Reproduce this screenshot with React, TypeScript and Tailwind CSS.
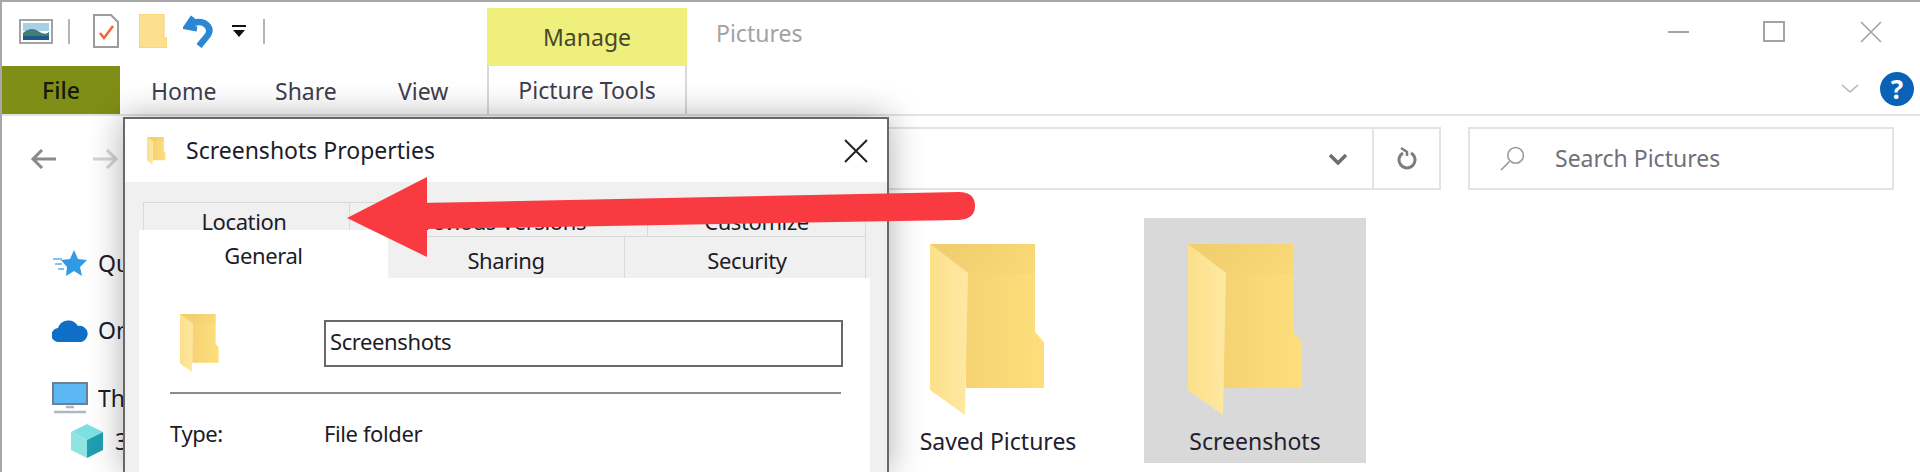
import { useId } from "react";

function FolderIcon({ className }: { className: string }) {
    const id = useId();
    return (
        <svg viewBox="0 0 118 174" className={className}>
            <defs>
                <linearGradient id={`${id}-back`} x1="0" x2="1" y1="0" y2="0">
                    <stop offset="0.3" stopColor="#f5d272" />
                    <stop offset="1" stopColor="#fedf7c" />
                </linearGradient>
                <linearGradient id={`${id}-flap`} x1="0" x2="1" y1="0" y2="0.6">
                    <stop offset="0" stopColor="#eccb6c" />
                    <stop offset="1" stopColor="#f6d576" />
                </linearGradient>
                <linearGradient id={`${id}-front`} x1="0" x2="1" y1="0" y2="0">
                    <stop offset="0" stopColor="#fce08a" />
                    <stop offset="1" stopColor="#fee8a2" />
                </linearGradient>
            </defs>
            <path d="M0 0H105V88L114 98V144H36V28Z" fill={`url(#${id}-back)`} />
            <path d="M0 0H105V30H38Z" fill={`url(#${id}-flap)`} opacity="0.6" />
            <path d="M0 0L38 29L35 171L0 146Z" fill={`url(#${id}-front)`} />
        </svg>
    );
}

function FolderItem({ label, selected }: { label: string; selected?: boolean }) {
    return (
        <div className={`flex h-[245px] w-[222px] flex-col items-center pt-[26px] ${selected ? "bg-[#d9d9d9]" : ""}`}>
            <FolderIcon className={`h-[174px] w-[118px] ${selected ? "translate-x-[-8px]" : "translate-x-[-9px]"}`} />
            <div className="mt-[9px] text-[23px] leading-[28px] text-[#1f2030]">{label}</div>
        </div>
    );
}

function DialogTab({ label, width, className = "" }: { label: string; width: string; className?: string }) {
    return (
        <div className={`flex items-center justify-center border-r border-t border-[#d9d9d9] bg-[#f0f0f0] text-[22px] tracking-[-0.4px] text-[#1c1c28] ${width} ${className}`}>
            {label}
        </div>
    );
}

function PropertiesDialog() {
    return (
        <div className="absolute left-[121px] top-[115px] h-[355px] w-[766px] border-x-2 border-t-2 border-[#686868] bg-white shadow-[0_0_32px_rgba(0,0,0,0.32)]">
            <div className="flex h-[63px] items-center pl-[22px] pr-[19px]">
                <FolderIcon className="h-[28px] w-[19px]" />
                <div className="ml-[20px] flex-1 text-[23px] text-[#1c1c2c]">Screenshots Properties</div>
                <svg viewBox="0 0 24 24" className="h-[24px] w-[24px]" fill="none" stroke="#222" strokeWidth="2">
                    <path d="M1 1L23 23M23 1L1 23" />
                </svg>
            </div>
            <div className="h-[292px] bg-[#f0f0f0] pt-[20px]">
                <div className="ml-[18px] flex h-[34px]">
                    <DialogTab label="Location" width="w-[207px]" className="border-l pr-[5px] pt-[3px]" />
                    <DialogTab label="Previous Versions" width="w-[298px]" className="pt-[3px]" />
                    <DialogTab label="Customize" width="w-[218px]" className="pt-[3px]" />
                </div>
                <div className="ml-[14px] flex h-[42px]">
                    <div className="-mt-[6px] flex h-[48px] w-[249px] items-center justify-center bg-white pt-[2px] text-[22px] tracking-[-0.4px] text-[#1c1c28]">
                        General
                    </div>
                    <DialogTab label="Sharing" width="w-[237px]" className="pt-[6px]" />
                    <DialogTab label="Security" width="w-[241px]" className="pl-[4px] pt-[6px]" />
                </div>
                <div className="ml-[14px] h-[196px] w-[731px] bg-white pl-[31px] pt-[42px]">
                    <div className="flex h-[47px] items-center">
                        <FolderIcon className="ml-[10px] h-[59px] w-[40px]" />
                        <div className="ml-[104px] flex h-[47px] w-[519px] items-center border-2 border-[#696969] pb-[5px] pl-[4px] text-[22px] tracking-[-0.4px] text-[#1c1c28]">
                            Screenshots
                        </div>
                    </div>
                    <div className="mt-[25px] h-[2px] w-[671px] bg-[#8c8c8c]" />
                    <div className="mt-[23px] flex text-[22px] tracking-[-0.4px] text-[#1c1c28]">
                        <div className="w-[154px]">Type:</div>
                        <div>File folder</div>
                    </div>
                </div>
            </div>
        </div>
    );
}

function RedArrow() {
    return (
        <svg viewBox="0 0 630 84" className="absolute left-[345px] top-[174px] h-[84px] w-[630px]">
            <path d="M0 42L80 1V27L612 16Q628 16 628 30Q628 43 612 44L80 53V81Z" fill="#fa3a41" />
        </svg>
    );
}

export default function App() {
    return (
        <div className="relative h-[472px] w-[1920px] overflow-hidden border-l-2 border-t-2 border-[#a8a8a8] bg-white font-['Noto_Sans',sans-serif]">
            {/* quick access row */}
            <div className="flex h-[64px]">
                <div className="flex h-[50px] w-[485px] items-center pl-[17px] pt-[8px]">
                    <svg viewBox="0 0 34 25" className="h-[25px] w-[34px]">
                        <rect x="1" y="1" width="32" height="23" fill="#fff" stroke="#a3a3a3" strokeWidth="2" />
                        <rect x="4" y="4" width="26" height="8" fill="#a8cfe8" />
                        <path d="M4 14Q12 7 19 12T30 13V21H4Z" fill="#3f7f74" />
                        <rect x="4" y="17" width="26" height="4" fill="#1f5a8c" />
                    </svg>
                    <div className="ml-[15px] h-[25px] w-[2px] bg-[#b5b5b5]" />
                    <svg viewBox="0 0 26 34" className="ml-[23px] h-[34px] w-[26px]" fill="none">
                        <path d="M1 1H18L25 8V33H1Z" stroke="#9c9c9c" strokeWidth="2" />
                        <path d="M7 19L11 24L20 12" stroke="#f0653a" strokeWidth="2.5" />
                    </svg>
                    <svg viewBox="0 0 28 34" className="ml-[20px] h-[34px] w-[28px]">
                        <path d="M0 0H25V24H28V34H0Z" fill="#fde08e" stroke="#f3cf6c" />
                    </svg>
                    <svg viewBox="0 0 30 33" className="ml-[16px] h-[33px] w-[30px]" fill="none">
                        <path d="M10 2L3 12L14 14" stroke="#2b86d6" strokeWidth="5" />
                        <path d="M5 11Q13 5 21 8Q29 13 25 20L16 31" stroke="#2b86d6" strokeWidth="6.5" />
                    </svg>
                    <svg viewBox="0 0 16 14" className="ml-[18px] h-[14px] w-[16px]">
                        <path d="M1 1H15V3H1ZM2 6H14L8 13Z" fill="#111" />
                    </svg>
                    <div className="ml-[16px] h-[25px] w-[2px] bg-[#b5b5b5]" />
                </div>
                <div className="mt-[6px] flex h-[58px] w-[200px] items-center justify-center bg-[#eeef7c] text-[23px] text-[#47472e]">
                    Manage
                </div>
                <div className="ml-[29px] pt-[14px] text-[23px] leading-[34px] text-[#a3a3a3]">Pictures</div>
                <div className="ml-auto flex h-[50px] items-center pr-[38px] pt-[9px]">
                    <div className="h-[2px] w-[21px] bg-[#a3a3a3]" />
                    <div className="ml-[74px] h-[21px] w-[22px] border-2 border-[#a3a3a3]" />
                    <svg viewBox="0 0 22 22" className="ml-[75px] h-[22px] w-[22px]" fill="none" stroke="#a3a3a3" strokeWidth="1.6">
                        <path d="M1 1L21 21M21 1L1 21" />
                    </svg>
                </div>
            </div>

            {/* ribbon tabs */}
            <div className="flex h-[50px] items-start border-b-2 border-[#e3e3e3] text-[23px] text-[#3e3e4e]">
                <div className="flex h-[48px] w-[118px] items-center justify-center bg-[#7f8e17] font-medium text-[#16180a]">File</div>
                <div className="ml-[31px] w-[62px] pt-[8px] leading-[34px]">Home</div>
                <div className="ml-[62px] w-[61px] pt-[8px] leading-[34px]">Share</div>
                <div className="ml-[62px] w-[52px] pt-[8px] leading-[34px]">View</div>
                <div className="ml-[37px] flex h-[48px] w-[200px] items-center justify-center border-x-2 border-[#d9d9d9] bg-white">Picture Tools</div>
                <div className="ml-auto flex items-center pr-[6px] pt-[6px]">
                    <svg viewBox="0 0 18 10" className="h-[10px] w-[18px]" fill="none" stroke="#b5b5b5" strokeWidth="1.6">
                        <path d="M1 1L9 8L17 1" />
                    </svg>
                    <div className="ml-[21px] flex h-[34px] w-[34px] items-center justify-center rounded-full bg-[#0a62b8] text-[26px] font-bold text-white">?</div>
                </div>
            </div>

            {/* address row */}
            <div className="mt-[11px] flex h-[63px] items-center pl-[28px]">
                <svg viewBox="0 0 26 20" className="h-[20px] w-[26px]" fill="none" stroke="#8a8a8a" strokeWidth="3">
                    <path d="M26 10H3M12 1L3 10L12 19" />
                </svg>
                <svg viewBox="0 0 26 20" className="ml-[37px] h-[20px] w-[26px]" fill="none" stroke="#d4d4d4" strokeWidth="3">
                    <path d="M0 10H23M14 1L23 10L14 19" />
                </svg>
                <div className="ml-[380px] flex h-[63px] w-[942px] items-center border-2 border-[#e3e3e3]">
                    <svg viewBox="0 0 20 12" className="ml-auto h-[12px] w-[20px]" fill="none" stroke="#6e6e6e" strokeWidth="3.5">
                        <path d="M2 2L10 10L18 2" />
                    </svg>
                    <div className="ml-[24px] flex h-[59px] w-[67px] items-center justify-center border-l-2 border-[#e3e3e3]">
                        <svg viewBox="0 0 20 24" className="h-[24px] w-[20px]" fill="none" stroke="#7d7d7d" strokeWidth="3">
                            <path d="M6 6A8 8 0 1 0 14 6" />
                            <path d="M4 1L10 5V9" strokeWidth="2.5" />
                        </svg>
                    </div>
                </div>
                <div className="ml-[27px] flex h-[63px] w-[426px] items-center border-2 border-[#e3e3e3] pl-[30px] text-[23px] text-[#70707a]">
                    <svg viewBox="0 0 24 24" className="h-[25px] w-[25px]" fill="none" stroke="#9a9a9a" strokeWidth="1.5">
                        <circle cx="15" cy="9" r="7.5" />
                        <path d="M9 15L1 23" />
                    </svg>
                    <span className="ml-[30px]">Search Pictures</span>
                </div>
            </div>

            {/* nav pane and folder view */}
            <div className="flex pt-[28px]">
                <div className="w-[885px] pl-[50px] pt-[20px] text-[23px] text-[#1c1c2c]">
                    <div className="flex h-[50px] w-[71px] items-center">
                        <svg viewBox="0 0 36 28" className="h-[28px] w-[36px] shrink-0">
                            <path d="M22 1L26 10L35 11L28 18L30 27L22 22L14 27L15 18L9 11L18 10Z" fill="#2f9be6" />
                            <path d="M1 10H10M3 15H10M6 20H12" stroke="#7fc4f0" strokeWidth="2" />
                        </svg>
                        <span className="ml-[10px] min-w-0 overflow-hidden whitespace-nowrap">Quick access</span>
                    </div>
                    <div className="mt-[17px] flex h-[50px] w-[71px] items-center">
                        <svg viewBox="0 0 36 24" className="h-[24px] w-[36px] shrink-0">
                            <path d="M7 24A7 7 0 0 1 6 10A11 11 0 0 1 26 8A8 8 0 0 1 29 24Z" fill="#0f6fc6" />
                        </svg>
                        <span className="ml-[10px] min-w-0 overflow-hidden whitespace-nowrap">OneDrive</span>
                    </div>
                    <div className="mt-[18px] flex h-[50px] w-[71px] items-center">
                        <svg viewBox="0 0 36 32" className="h-[32px] w-[36px] shrink-0">
                            <rect x="1" y="1" width="34" height="21" fill="#5cb8f2" stroke="#6d7f90" strokeWidth="2" />
                            <path d="M14 25H22M2 30H34" stroke="#aeb8c2" strokeWidth="2.5" />
                        </svg>
                        <span className="ml-[10px] min-w-0 overflow-hidden whitespace-nowrap">This PC</span>
                    </div>
                    <div className="mt-[1px] ml-[18px] flex h-[34px] w-[53px] items-center">
                        <svg viewBox="0 0 34 34" className="h-[34px] w-[34px] shrink-0">
                            <path d="M17 0L33 8L17 16L1 8Z" fill="#7fe0e4" />
                            <path d="M1 8L17 16V34L1 26Z" fill="#8fe3e0" />
                            <path d="M33 8L17 16V34L33 26Z" fill="#1f9fb0" />
                        </svg>
                        <span className="ml-[11px] min-w-0 overflow-hidden whitespace-nowrap">3D Objects</span>
                    </div>
                </div>
                <div className="flex gap-[35px]">
                    <FolderItem label="Saved Pictures" />
                    <FolderItem label="Screenshots" selected />
                </div>
            </div>

            <PropertiesDialog />
            <RedArrow />
        </div>
    );
}
